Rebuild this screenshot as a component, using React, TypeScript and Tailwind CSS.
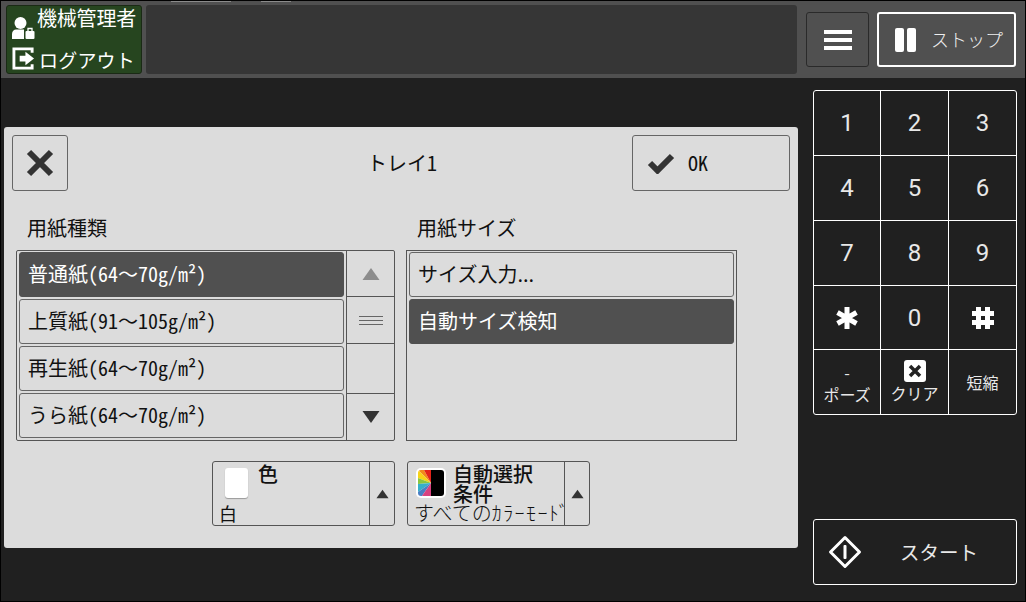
const jp = "font-['Noto_Sans_CJK_JP',sans-serif]";

// 半角英数字は等幅で細く見せる
function Latin({ children }: { children: string }) {
  return <span className="text-[20px] [font-feature-settings:'hwid']">{children}</span>;
}

function PaperLabel({ name, from, to }: { name: string; from: string; to: string }) {
  return (
    <span className="flex items-center whitespace-nowrap">
      {name}
      <Latin>{from}</Latin>～<Latin>{to}</Latin>
    </span>
  );
}

const paperTypes = [
  { name: "普通紙", from: "(64", to: "70g/m²)", active: true },
  { name: "上質紙", from: "(91", to: "105g/m²)", active: false },
  { name: "再生紙", from: "(64", to: "70g/m²)", active: false },
  { name: "うら紙", from: "(64", to: "70g/m²)", active: false },
];

function ListItem({ active, children }: { active?: boolean; children: React.ReactNode }) {
  return (
    <div
      className={`flex h-[45px] items-center rounded-[3px] border pb-[1px] pl-2 text-[20px] ${
        active ? "border-[#505050] bg-[#505050] text-white" : "border-[#666] bg-[#dcdcdc] text-[#111]"
      }`}
    >
      {children}
    </div>
  );
}

function UpArrow({ className }: { className?: string }) {
  return (
    <svg viewBox="0 0 18 14" className={className}>
      <path d="M9 1 17.5 13H.5Z" fill="currentColor" />
    </svg>
  );
}

function ColorIcon() {
  return (
    <svg viewBox="0 0 30 30" className="h-[30px] w-[30px] shrink-0">
      <rect x="0" y="0" width="30" height="30" rx="5" fill="#fff" />
      <clipPath id="colorclip">
        <rect x="2" y="2" width="26" height="26" rx="3" />
      </clipPath>
      <g clipPath="url(#colorclip)">
        <path d="M15 15 2 2H8Z" fill="#f28a1c" />
        <path d="M15 15 8 2H15Z" fill="#e2231a" />
        <path d="M15 15 2 2V10Z" fill="#f7d417" />
        <path d="M15 15 2 10V16Z" fill="#8cc63f" />
        <path d="M15 15 2 16V24Z" fill="#35b0c9" />
        <path d="M15 15 2 24V28H6Z" fill="#4a7fc4" />
        <path d="M15 15 6 28H15Z" fill="#d8427f" />
        <rect x="15" y="2" width="13" height="26" fill="#000" />
      </g>
    </svg>
  );
}

const keys = ["1", "2", "3", "4", "5", "6", "7", "8", "9"];

function Key({ children, last, bottom }: { children: React.ReactNode; last?: boolean; bottom?: boolean }) {
  return (
    <div
      className={`flex flex-col items-center justify-center border-white text-[#e8e8e8] ${last ? "" : "border-r"} ${
        bottom ? "" : "border-b"
      }`}
    >
      {children}
    </div>
  );
}

export default function App() {
  return (
    <div className={`flex h-[602px] w-[1026px] flex-col overflow-hidden border border-black bg-[#202020] ${jp}`}>
      {/* 上部バー */}
      <header className="flex h-[77px] shrink-0 flex-col bg-[#505050]">
        <div className="flex h-[4px] shrink-0 items-start pl-[170px]">
          <div className="h-px w-[60px] bg-[#8a8a8a]" />
          <div className="ml-[30px] h-px w-[30px] bg-[#8a8a8a]" />
        </div>
        <div className="flex items-start">
          <div className="ml-[5px] flex h-[69px] w-[136px] flex-col rounded-[3px] border border-[#1a2a15] bg-[#26451f] text-white">
            <div className="flex h-[36px] items-start">
              <svg viewBox="0 0 24 24" className="ml-[5px] mt-[10px] h-[24px] w-[24px] shrink-0" fill="#fff">
                <circle cx="8.5" cy="7" r="6" />
                <path d="M0 23v-5c0-3 2-4.500 4-4.500h8V23Z" />
                <rect x="13.500" y="15" width="9" height="8" rx="1" />
                <path d="M16 15v-2.500h4V15" fill="none" stroke="#fff" strokeWidth="1.300" />
              </svg>
              <span className="ml-[1px] mt-[-1px] whitespace-nowrap text-[20px] leading-[26px] tracking-[-0.2px]">機械管理者</span>
            </div>
            <div className="flex items-start">
              <svg viewBox="0 0 24 24" className="ml-[5px] mt-[5px] h-[23px] w-[23px] shrink-0">
                <path d="M21 6V2H2v20h19v-4" fill="none" stroke="#fff" strokeWidth="3" />
                <path d="M8 9h6V5l9 7-9 7v-4H8Z" fill="#fff" />
              </svg>
              <span className="ml-[4px] mt-[5px] whitespace-nowrap text-[19px] leading-[26px] tracking-[0.2px]">ログアウト</span>
            </div>
          </div>
          <div className="ml-[4px] h-[69px] w-[651px] rounded-[3px] bg-[#363636]" />
          <button className="ml-[9px] mt-[7px] flex h-[55px] w-[63px] flex-col items-center justify-center gap-[4px] rounded-[3px] border border-[#2a2a2a] bg-[#505050]">
            <span className="h-[4px] w-[28px] bg-white" />
            <span className="h-[4px] w-[28px] bg-white" />
            <span className="h-[4px] w-[28px] bg-white" />
          </button>
          <button className="ml-[8px] mt-[7px] flex h-[55px] w-[139px] items-center rounded-[3px] border-2 border-white bg-[#505050] pl-[16px] text-[#eee]">
            <span className="h-[24px] w-[9px] rounded-[2px] bg-white" />
            <span className="ml-[3px] h-[24px] w-[9px] rounded-[2px] bg-white" />
            <span className="ml-[15px] whitespace-nowrap text-[18px] font-light">ストップ</span>
          </button>
        </div>
      </header>

      <div className="flex flex-1 items-start">
        {/* ダイアログ */}
        <main className="ml-[3px] mt-[49px] h-[421px] w-[794px] rounded-[3px] bg-[#dcdcdc] text-[#111]">
          <div className="flex items-center px-2 pt-2">
            <button className="flex h-[56px] w-[56px] items-center justify-center rounded-[3px] border border-[#666]">
              <svg viewBox="0 0 28 28" className="h-[28px] w-[28px]">
                <path d="M3 3 25 25M25 3 3 25" stroke="#333" strokeWidth="6" />
              </svg>
            </button>
            <span className="ml-[299px] flex items-center whitespace-nowrap text-[20px]">
              トレイ<Latin>1</Latin>
            </span>
            <button className="ml-auto flex h-[56px] w-[158px] items-center rounded-[3px] border border-[#666] pl-[14px]">
              <svg viewBox="0 0 28 22" className="h-[22px] w-[28px]">
                <path d="M3 11 10.500 18.500 25 4" fill="none" stroke="#333" strokeWidth="6" />
              </svg>
              <span className="ml-[13px]"><Latin>OK</Latin></span>
            </button>
          </div>

          <div className="mt-[24px] flex pl-[12px]">
            <div className="w-[379px]">
              <div className="h-[35px] pl-[11px] text-[20px] leading-[26px]">用紙種類</div>
              <div className="flex h-[191px] rounded-[2px] border border-[#555]">
                <div className="flex w-[330px] flex-col gap-[2px] border-r border-[#555] px-[2px] py-[1px]">
                  {paperTypes.map((p) => (
                    <ListItem key={p.name} active={p.active}>
                      <PaperLabel name={p.name} from={p.from} to={p.to} />
                    </ListItem>
                  ))}
                </div>
                <div className="flex flex-1 flex-col">
                  <div className="flex h-[45px] items-center justify-center">
                    <UpArrow className="h-[14px] w-[18px] text-[#8c8c8c]" />
                  </div>
                  <div className="flex h-[48px] flex-col items-center justify-center gap-[3px] border-y border-[#555]">
                    <span className="h-px w-[24px] bg-[#666]" />
                    <span className="h-px w-[24px] bg-[#666]" />
                    <span className="h-px w-[24px] bg-[#666]" />
                  </div>
                  <div className="flex-1" />
                  <div className="flex h-[47px] items-center justify-center border-t border-[#555]">
                    <UpArrow className="h-[14px] w-[18px] rotate-180 text-[#333]" />
                  </div>
                </div>
              </div>
            </div>

            <div className="ml-[11px] w-[331px]">
              <div className="h-[35px] pl-[11px] text-[20px] leading-[26px]">用紙サイズ</div>
              <div className="flex h-[191px] flex-col gap-[2px] border border-[#555] px-[2px] py-[1px]">
                <ListItem>サイズ入力...</ListItem>
                <ListItem active>自動サイズ検知</ListItem>
              </div>
            </div>
          </div>

          <div className="mt-[20px] flex gap-[12px] pl-[208px]">
            <button className="flex h-[65px] w-[183px] rounded-[3px] border border-[#555] text-left">
              <div className="flex-1">
                <div className="flex h-[41px] pl-[12px] pt-[6px]">
                  <span className="h-[30px] w-[23px] rounded-[3px] bg-white shadow-[0_1px_1px_#999]" />
                  <span className="ml-[10px] mt-[-7px] text-[20px] font-medium leading-[26px]">色</span>
                </div>
                <div className="pl-[6px] text-[18px] leading-[20px]">白</div>
              </div>
              <div className="flex w-[25px] items-center justify-center border-l border-[#555]">
                <UpArrow className="h-[10px] w-[13px] text-[#333]" />
              </div>
            </button>
            <button className="flex h-[65px] w-[183px] rounded-[3px] border border-[#555] text-left">
              <div className="min-w-0 flex-1">
                <div className="flex h-[41px] pl-[8px] pt-[6px]">
                  <ColorIcon />
                  <span className="ml-[7px] mt-[-4px] whitespace-nowrap text-[20px] font-medium leading-[20px]">
                    自動選択
                    <br />
                    条件
                  </span>
                </div>
                <div className="whitespace-nowrap pl-[6px] text-[20px] font-light leading-[20px]">
                  すべての<span className="tracking-[1.4px] [font-feature-settings:'hwid']">ｶﾗｰﾓｰﾄﾞ</span>
                </div>
              </div>
              <div className="flex w-[25px] items-center justify-center border-l border-[#555]">
                <UpArrow className="h-[10px] w-[13px] text-[#333]" />
              </div>
            </button>
          </div>
        </main>

        {/* テンキー */}
        <aside className="ml-[15px] mt-[12px] flex w-[204px] flex-col">
          <div className="grid h-[325px] grid-cols-[67px_68px_1fr] grid-rows-[65px_65px_65px_64px_1fr] rounded-[3px] border border-white font-['Roboto',sans-serif] text-[24px]">
            {keys.map((k, i) => (
              <Key key={k} last={(i + 1) % 3 === 0}>
                {k}
              </Key>
            ))}
            <Key>
              <svg viewBox="0 0 26 26" className="h-[26px] w-[26px]">
                <path d="M13 2v22M3.500 7.500l19 11M22.500 7.500l-19 11" stroke="#fff" strokeWidth="5" />
              </svg>
            </Key>
            <Key>0</Key>
            <Key last>
              <svg viewBox="0 0 26 26" className="h-[26px] w-[26px]">
                <path d="M8.500 2v22M17.500 2v22M2 8.500h22M2 17.500h22" stroke="#fff" strokeWidth="5" />
              </svg>
            </Key>
            <Key bottom>
              <span className={`mt-[2px] text-[16px] leading-[22px] ${jp}`}>-</span>
              <span className={`text-[16px] leading-[22px] ${jp}`}>ポーズ</span>
            </Key>
            <Key bottom>
              <svg viewBox="0 0 22 22" className="h-[22px] w-[22px]">
                <rect width="22" height="22" rx="3" fill="#fff" />
                <path d="M6 6 16 16M16 6 6 16" stroke="#222" strokeWidth="3.500" />
              </svg>
              <span className={`text-[16px] leading-[22px] ${jp}`}>クリア</span>
            </Key>
            <Key bottom last>
              <span className={`text-[16px] ${jp}`}>短縮</span>
            </Key>
          </div>

          <button className="mt-[104px] flex h-[66px] items-center rounded-[3px] border border-white pl-[14px] text-[#e8e8e8]">
            <svg viewBox="0 0 34 34" className="h-[34px] w-[34px] shrink-0">
              <path d="M17 2.500 31.500 17 17 31.500 2.500 17Z" fill="none" stroke="#fff" strokeWidth="3" strokeLinejoin="round" />
              <rect x="15.500" y="10" width="3" height="14" rx="1" fill="#fff" />
            </svg>
            <span className="ml-[38px] whitespace-nowrap text-[19.500px]">スタート</span>
          </button>
        </aside>
      </div>
    </div>
  );
}
